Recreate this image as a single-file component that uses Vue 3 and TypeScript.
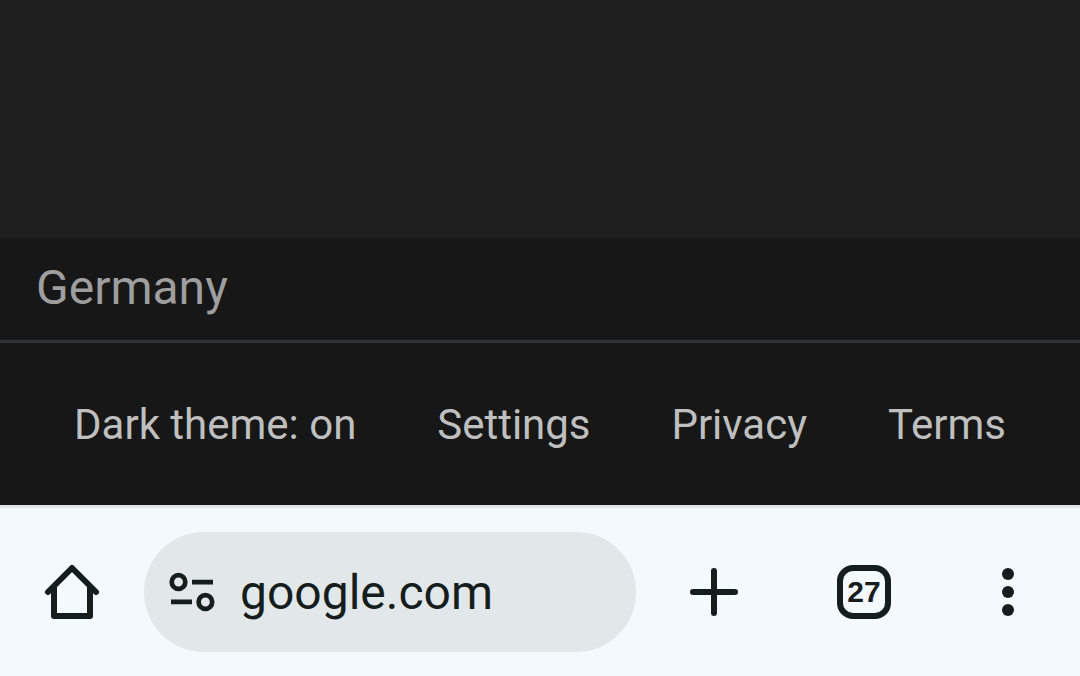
<script setup lang="ts">
import { ref } from 'vue'

interface FooterLink {
  label: string
  href: string
}

const region = 'Germany'
const address = ref('google.com')
const openTabs = ref(27)

const links: FooterLink[] = [
  { label: 'Dark theme: on', href: '#theme' },
  { label: 'Settings', href: '#settings' },
  { label: 'Privacy', href: '#privacy' },
  { label: 'Terms', href: '#terms' },
]
</script>

<template>
  <div class="screen">
    <main class="content"></main>

    <footer class="footer">
      <div class="region">{{ region }}</div>
      <nav class="links" aria-label="Footer">
        <a v-for="link in links" :key="link.label" :href="link.href">{{ link.label }}</a>
      </nav>
    </footer>

    <div class="toolbar" role="toolbar" aria-label="Browser">
      <button class="tool" type="button" aria-label="Home">
        <svg width="60" height="60" viewBox="0 0 60 60" fill="none" stroke="currentColor" stroke-width="6" stroke-linecap="round" stroke-linejoin="round">
          <path d="M6 30 30 6l24 24" />
          <path d="M12 26v28h36V26" />
        </svg>
      </button>

      <form class="address" @submit.prevent>
        <button class="site-info" type="button" aria-label="Site information">
          <svg width="48" height="48" viewBox="0 0 48 48" fill="none" stroke="currentColor" stroke-width="4.7">
            <circle cx="10.5" cy="14" r="6.8" />
            <path d="M24 14.2h21M3 33.8h21" />
            <circle cx="37.4" cy="34" r="6.8" />
          </svg>
        </button>
        <input v-model="address" type="text" aria-label="Address" spellcheck="false" />
      </form>

      <button class="tool new-tab" type="button" aria-label="New tab">
        <svg width="48" height="48" viewBox="0 0 48 48" fill="none" stroke="currentColor" stroke-width="6" stroke-linecap="round">
          <path d="M24 3v42M3 24h42" />
        </svg>
      </button>

      <button class="tool" type="button" aria-label="Switch tabs">
        <span class="tab-count">{{ openTabs }}</span>
      </button>

      <button class="tool" type="button" aria-label="Menu">
        <svg width="48" height="48" viewBox="0 0 48 48" fill="currentColor">
          <circle cx="24" cy="6" r="6" />
          <circle cx="24" cy="24" r="6" />
          <circle cx="24" cy="42" r="6" />
        </svg>
      </button>
    </div>
  </div>
</template>

<style>
body {
  margin: 0;
}
</style>

<style scoped>
.screen {
  display: flex;
  flex-direction: column;
  min-height: 100vh;
  font-family: Roboto, "Liberation Sans", sans-serif;
  background: #1f1f1f;
}

.content {
  flex: 1;
}

.footer {
  background: #171717;
}

.region {
  padding: 20px 36px 22px;
  border-bottom: 3px solid #313233;
  color: #9e9e9e;
  font-size: 48px;
  line-height: 60px;
}

.links {
  display: flex;
  justify-content: space-between;
  padding: 56px 74px 54px;
  font-size: 42px;
  line-height: 52px;
}

.links a {
  color: #bfbfbf;
  text-decoration: none;
  white-space: nowrap;
}

.toolbar {
  display: flex;
  align-items: center;
  padding: 24px 0;
  border-top: 3px solid #dfe5e6;
  background: #f4f9fd;
  color: #161d1d;
}

button {
  display: flex;
  align-items: center;
  justify-content: center;
  margin: 0;
  padding: 0;
  border: 0;
  background: none;
  color: inherit;
  font: inherit;
}

.tool {
  flex: none;
  width: 144px;
  height: 120px;
}

.new-tab {
  width: 156px;
}

.address {
  display: flex;
  flex: 1;
  align-items: center;
  gap: 24px;
  min-width: 0;
  height: 120px;
  padding: 0 24px;
  box-sizing: border-box;
  border-radius: 60px;
  background: #e2e7e9;
}

.site-info {
  flex: none;
}

.address input {
  flex: 1;
  min-width: 0;
  height: 72px;
  padding: 0;
  border: 0;
  outline: 0;
  background: none;
  color: inherit;
  font-family: Roboto, "Liberation Sans", sans-serif;
  font-size: 48px;
}

.tab-count {
  display: flex;
  align-items: center;
  justify-content: center;
  width: 54px;
  height: 54px;
  box-sizing: border-box;
  border: 6px solid currentColor;
  border-radius: 16px;
  font-family: "Liberation Sans", sans-serif;
  font-size: 30px;
  font-weight: 700;
  line-height: 42px;
}
</style>
